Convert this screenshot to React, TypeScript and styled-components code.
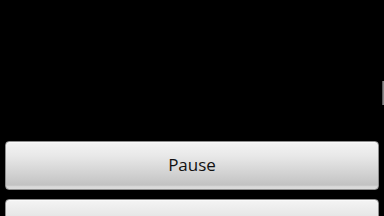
import React from "react";
import styled, { createGlobalStyle } from "styled-components";

const Global = createGlobalStyle`
  html, body { margin: 0; padding: 0; background: #000; }
  body { width: 384px; height: 216px; overflow: hidden; font-family: "Open Sans", "Noto Sans", "DejaVu Sans", sans-serif; }
`;

const Screen = styled.div`
  position: relative;
  width: 384px;
  height: 216px;
  overflow: hidden;
  background: #000;
  display: flex;
  flex-direction: column;
`;

const Surface = styled.div`
  height: 141px;
  flex: none;
`;

const ButtonList = styled.div`
  display: flex;
  flex-direction: column;
  gap: 9px;
  padding: 0 5px;
`;

const Button = styled.button`
  flex: none;
  height: 49px;
  width: 100%;
  margin: 0;
  padding: 0 0 2px;
  border: 1px solid #8e8e8e;
  border-radius: 4px;
  background: linear-gradient(to bottom, #f4f4f4 0%, #e8e8e8 30%, #d0d0d0 70%, #c2c2c2 92%, #d6d6d6 94%, #dcdcdc 100%);
  box-shadow: inset 0 1px 0 #fafafa;
  color: #111;
  font-family: "Open Sans", "Noto Sans", "DejaVu Sans", sans-serif;
  font-size: 17px;
  display: flex;
  align-items: center;
  justify-content: center;
`;

const ScrollThumb = styled.div`
  position: absolute;
  left: 382px;
  top: 81px;
  width: 2px;
  height: 24px;
  background: linear-gradient(to right, #4a4a4a, #9a9a9a);
`;

export default function App() {
  return (
    <Screen>
      <Global />
      <Surface />
      <ButtonList>
        <Button>Pause</Button>
        <Button aria-label="Stop" />
      </ButtonList>
      <ScrollThumb />
    </Screen>
  );
}
